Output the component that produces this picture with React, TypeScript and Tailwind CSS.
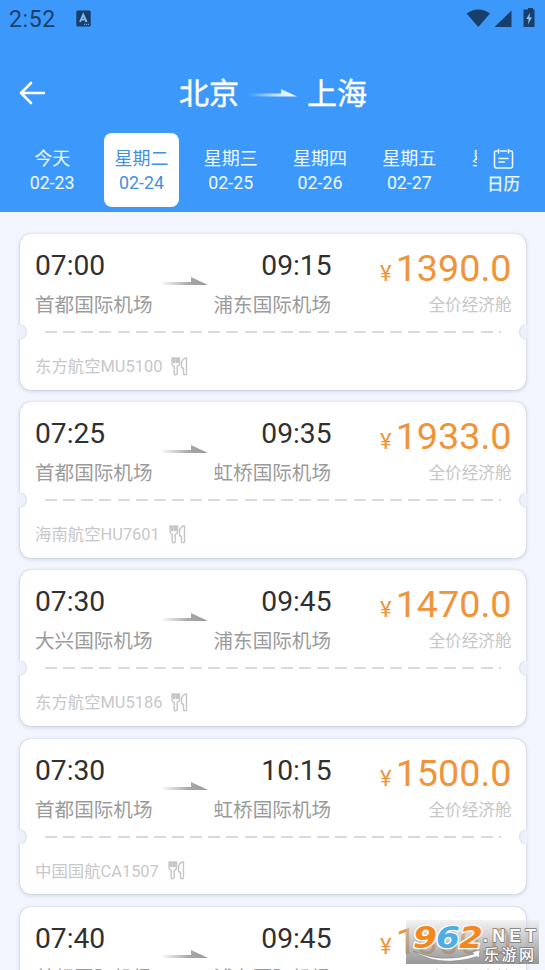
const SANS = "font-[Roboto,'Noto_Sans_CJK_SC',sans-serif]";

type Flight = {
  depart: string;
  arrive: string;
  from: string;
  to: string;
  price: string;
  carrier: string;
};

const flights: Flight[] = [
  { depart: '07:00', arrive: '09:15', from: '首都国际机场', to: '浦东国际机场', price: '1390.0', carrier: '东方航空MU5100' },
  { depart: '07:25', arrive: '09:35', from: '首都国际机场', to: '虹桥国际机场', price: '1933.0', carrier: '海南航空HU7601' },
  { depart: '07:30', arrive: '09:45', from: '大兴国际机场', to: '浦东国际机场', price: '1470.0', carrier: '东方航空MU5186' },
  { depart: '07:30', arrive: '10:15', from: '首都国际机场', to: '虹桥国际机场', price: '1500.0', carrier: '中国国航CA1507' },
  { depart: '07:40', arrive: '09:45', from: '首都国际机场', to: '浦东国际机场', price: '1300.0', carrier: '东方航空MU5102' },
];

const days = [
  { name: '今天', date: '02-23' },
  { name: '星期二', date: '02-24' },
  { name: '星期三', date: '02-25' },
  { name: '星期四', date: '02-26' },
  { name: '星期五', date: '02-27' },
  { name: '星期六', date: '' },
];

function StatusBar() {
  return (
    <div className="flex h-9 items-center pl-[9px] pr-[9px] text-[#173f69]">
      <span className="text-[23px] leading-9 tracking-[0.6px] pt-[3px]">2:52</span>
      <svg className="ml-[20px]" width="15" height="17" viewBox="0 0 15 17">
        <rect x="0.3" y="0.5" width="14.4" height="16" rx="1.5" fill="currentColor" />
        <path d="M4 12 7.2 4.5 10.6 12M5.3 9.5h4" fill="none" stroke="#83baf4" strokeWidth="1.9" />
        <path d="M8 14.3h5" stroke="#83baf4" strokeWidth="1" strokeDasharray="1.2 .8" />
      </svg>
      <svg className="ml-auto" width="70" height="22" viewBox="0 0 70 22" fill="currentColor">
        <path d="M.6 6.5Q12.400 -1.500 24 6.500L12.300 20Z" />
        <path d="M45.500 3.500V20H28.500Z" />
        <path d="M60 2.500h2V1h5v1.500h1.500v17.500H57.500V2.500Z" />
        <path d="M64.200 5.500 60.200 12h2.400l-.6 5.500 4-7.200h-2.600Z" fill="#8cbdf2" />
      </svg>
    </div>
  );
}

function Header() {
  return (
    <header className="h-[212px] bg-[#3d98fc] text-white">
      <StatusBar />
      <div className="flex h-[97px] items-center pt-[18px]">
        <svg className="ml-[19px] mr-[133px] -mt-[2px]" width="27" height="24" viewBox="0 0 27 24" fill="none" stroke="white" strokeWidth="2.600" strokeLinecap="round" strokeLinejoin="round">
          <path d="M25 12H2M12 2 2 12l10 10" />
        </svg>
        <span className="text-[30px] leading-10 pt-px [-webkit-text-stroke:0.4px_white]">北京</span>
        <svg className="mx-[9px]" width="50" height="12" viewBox="0 0 50 12">
          <defs>
            <linearGradient id="route"><stop stopColor="white" stopOpacity="0" /><stop offset=".65" stopColor="white" stopOpacity=".8" /><stop offset="1" stopColor="white" /></linearGradient>
          </defs>
          <path d="M0 5.500H33V1L49 8.500H0Z" fill="url(#route)" />
        </svg>
        <span className="text-[30px] leading-10 pt-px [-webkit-text-stroke:0.4px_white]">上海</span>
      </div>
      <div className="flex h-[74px]">
        <div className="flex w-[477px] overflow-hidden pl-[7.500px]">
          {days.map((day, i) => (
            <div key={day.name} className="flex w-[89.300px] shrink-0 justify-center">
              <div className={i === 1
                ? 'w-[74.500px] rounded-[8px] bg-white pt-[13px] text-center text-[18px] leading-[25px] text-[#438fe0]'
                : 'w-[74.500px] pt-[13px] text-center text-[18px] leading-[25px] text-[#f0faff]'}>
                <div>{day.name}</div>
                <div className="text-[17.800px] -mt-px">{day.date}</div>
              </div>
            </div>
          ))}
        </div>
        <div className="flex w-[53px] flex-col items-center pt-[15px]">
          <svg width="21" height="22" viewBox="0 0 21 22" fill="none" stroke="#f0faff" strokeWidth="1.500" strokeLinecap="round">
            <path d="M4 3H3Q1.500 3 1.500 4.500v13.500Q1.500 20 3.500 20h14q2 0 2-2V4.500Q19.500 3 18 3h-1M7.500 3h6M5.500 1.500v3.500M15.500 1.500v3.500M6 10.500h9M6 14h5.500" />
          </svg>
          <span className="text-[16.500px] leading-6 text-[#f0faff] pt-[3px] [-webkit-text-stroke:0.25px_#f0faff]">日历</span>
        </div>
      </div>
    </header>
  );
}

function MealIcon() {
  return (
    <svg className="-mt-[2px]" width="17" height="19" viewBox="0 0 17 19" fill="none" stroke="#c5c5c5" strokeWidth="1.400" strokeLinejoin="round">
      <path d="M1 1v6q0 1.600 2.200 2.400v7.100q0 1.200 1.500 1.200t1.500-1.200V9.400Q8.500 8.600 8.500 7V1H7v4.500H5.700V1H4v4.500H2.600V1Z" />
      <path d="M15.500 1q-3.500 0-5 4.500v5l2 1v5q0 1.200 1.500 1.200t1.500-1.200Z" />
    </svg>
  );
}

function Notch({ side }: { side: 'left' | 'right' }) {
  return (
    <span className={side === 'left'
      ? 'absolute left-[-9px] top-[90px] h-4 w-4 rounded-full bg-[#edf1fa] shadow-[inset_-1px_0_1.5px_#d9deea] [clip-path:inset(0_0_0_7px)]'
      : 'absolute right-[-9px] top-[90px] h-4 w-4 rounded-full bg-[#edf1fa] shadow-[inset_1px_0_1.5px_#d9deea] [clip-path:inset(0_7px_0_0)]'} />
  );
}

function FlightCard({ flight }: { flight: Flight }) {
  return (
    <article className="relative h-[155.500px] w-[505.500px] shrink-0 rounded-[11px] bg-white shadow-[0_1px_4px_rgba(90,105,140,0.3),0_0_1px_rgba(70,80,110,0.35)]">
      <div className="flex h-[97px] pl-[15px] pr-[14px] pt-[16px]">
        <div className="w-[118px] whitespace-nowrap">
          <div className="text-[28.200px] leading-8 text-[#303030]">{flight.depart}</div>
          <div className="mt-[12px] text-[19.600px] leading-6 text-[#9b9b9b]">{flight.from}</div>
        </div>
        <svg className="ml-[7px] mr-[5.500px] mt-[26px]" width="48" height="10" viewBox="0 0 48 10">
          <defs>
            <linearGradient id="leg"><stop stopColor="#999" stopOpacity="0" /><stop offset=".6" stopColor="#999" stopOpacity=".85" /><stop offset="1" stopColor="#999" /></linearGradient>
          </defs>
          <path d="M0 6H31V1L48 9H0Z" fill="url(#leg)" />
        </svg>
        <div className="w-[118px] whitespace-nowrap">
          <div className="text-right text-[28.200px] leading-8 text-[#303030]">{flight.arrive}</div>
          <div className="mt-[12px] text-[19.600px] leading-6 text-[#9b9b9b]">{flight.to}</div>
        </div>
        <div className="-mt-px ml-auto text-right">
          <div className="flex h-[38px] items-baseline justify-end text-[#f0943a]">
            <span className="mr-[4px] text-[22px] leading-[38px]">¥</span>
            <span className="text-[37.700px] leading-[38px]">{flight.price}</span>
          </div>
          <div className="mt-[7px] text-[16.600px] leading-6 text-[#c6c6c6]">全价经济舱</div>
        </div>
      </div>
      <div className="ml-[25px] h-[2px] w-[456px] bg-[repeating-linear-gradient(90deg,#dadada_0_12px,transparent_12px_18.150px)]" />
      <div className="flex items-center gap-[9px] pl-[15px] pt-[24px] text-[16.400px] leading-5 text-[#c8c8c8]">
        <span>{flight.carrier}</span>
        <MealIcon />
      </div>
      <Notch side="left" />
      <Notch side="right" />
    </article>
  );
}

function SiteBadge() {
  return (
    <div className="absolute left-[406px] top-[920px] flex h-[44px] w-[133px] bg-linear-to-b from-[#e8e8e8]/50 to-[#858585]/85">
      <svg width="133" height="44" viewBox="0 0 133 44" fontFamily="DejaVu Sans, Noto Sans CJK SC, sans-serif" fontWeight="bold">
        <g fontSize="31" fontStyle="italic" stroke="white" strokeWidth="2.600" paintOrder="stroke" strokeLinejoin="round">
          <text x="7" y="28" textLength="24" lengthAdjust="spacingAndGlyphs" fill="#f5871f">9</text>
          <text x="30" y="28" textLength="24" lengthAdjust="spacingAndGlyphs" fill="#4daee5">6</text>
          <text x="53" y="28" textLength="24" lengthAdjust="spacingAndGlyphs" fill="#f5871f">2</text>
        </g>
        <path d="M7 31Q35 44 68 34L66 32 74 30 73 38 71 36.500Q34 48 7 31Z" fill="white" stroke="#777" strokeWidth=".5" />
        <g fill="white" stroke="#777" strokeWidth="1.400" paintOrder="stroke">
          <text x="77" y="22" fontSize="17.500" fontFamily="Liberation Sans" textLength="53" lengthAdjust="spacing">.NET</text>
          <g fontFamily="Noto Sans CJK SC" fontSize="15" fontWeight="500">
            <text x="78" y="39.500">乐</text>
            <text x="95.500" y="39.500">游</text>
            <text x="113" y="39.500">网</text>
          </g>
        </g>
      </svg>
    </div>
  );
}

export default function App() {
  return (
    <div className={`relative h-[970px] w-[545px] overflow-hidden bg-[#f3f6fe] ${SANS}`}>
      <Header />
      <main className="flex flex-col gap-[12.700px] pl-5 pt-[22px]">
        {flights.map((flight, i) => <FlightCard key={i} flight={flight} />)}
      </main>
      <SiteBadge />
    </div>
  );
}
